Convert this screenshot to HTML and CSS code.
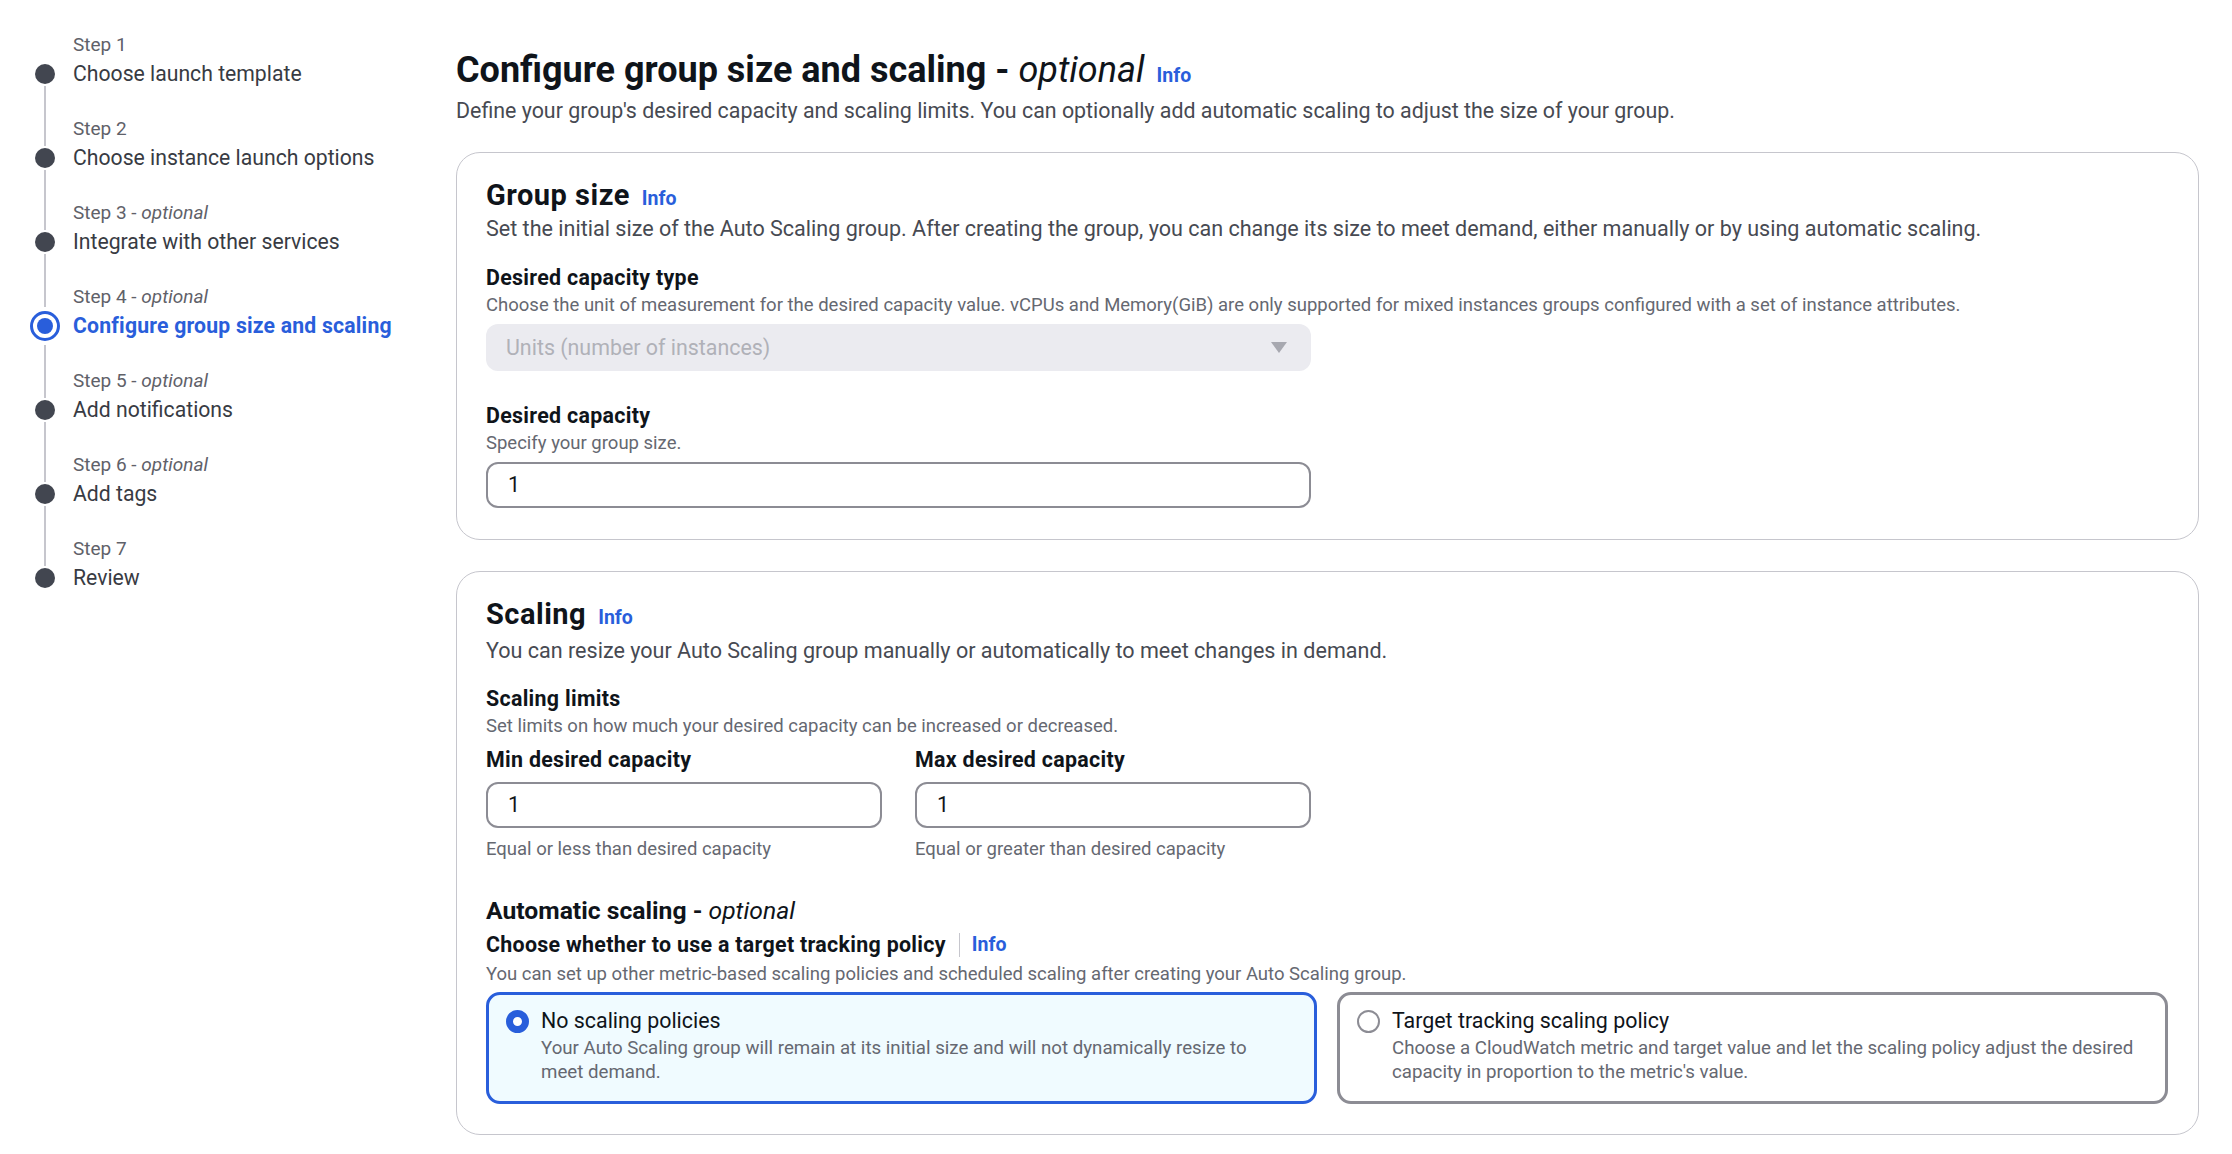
FILE: index.html
```html
<!DOCTYPE html>
<html lang="en">
<head>
<meta charset="utf-8">
<title>Configure group size and scaling</title>
<link rel="stylesheet" href="styles.css">
</head>
<body>
<div class="page">
  <nav class="wizard-nav">
    <ol class="steps">
      <li class="step first">
        <div class="rail"><span class="seg top"></span><span class="dot"></span><span class="seg bottom"></span></div>
        <div class="step-label">Step 1</div>
        <div class="step-title">Choose launch template</div>
      </li>
      <li class="step">
        <div class="rail"><span class="seg top"></span><span class="dot"></span><span class="seg bottom"></span></div>
        <div class="step-label">Step 2</div>
        <div class="step-title">Choose instance launch options</div>
      </li>
      <li class="step">
        <div class="rail"><span class="seg top"></span><span class="dot"></span><span class="seg bottom"></span></div>
        <div class="step-label">Step 3 - <i>optional</i></div>
        <div class="step-title">Integrate with other services</div>
      </li>
      <li class="step active">
        <div class="rail"><span class="seg top"></span><span class="ring"><span class="ring-dot"></span></span><span class="seg bottom"></span></div>
        <div class="step-label">Step 4 - <i>optional</i></div>
        <div class="step-title">Configure group size and scaling</div>
      </li>
      <li class="step">
        <div class="rail"><span class="seg top"></span><span class="dot"></span><span class="seg bottom"></span></div>
        <div class="step-label">Step 5 - <i>optional</i></div>
        <div class="step-title">Add notifications</div>
      </li>
      <li class="step">
        <div class="rail"><span class="seg top"></span><span class="dot"></span><span class="seg bottom"></span></div>
        <div class="step-label">Step 6 - <i>optional</i></div>
        <div class="step-title">Add tags</div>
      </li>
      <li class="step last">
        <div class="rail"><span class="seg top"></span><span class="dot"></span><span class="seg bottom"></span></div>
        <div class="step-label">Step 7</div>
        <div class="step-title">Review</div>
      </li>
    </ol>
  </nav>

  <main class="content">
    <header class="page-header">
      <h1 class="page-title">Configure group size and scaling - <i>optional</i><a class="info info-h1" href="#">Info</a></h1>
      <p class="page-desc">Define your group's desired capacity and scaling limits. You can optionally add automatic scaling to adjust the size of your group.</p>
    </header>

    <section class="panel panel-first">
      <h2 class="panel-title">Group size<a class="info" href="#">Info</a></h2>
      <p class="panel-desc">Set the initial size of the Auto Scaling group. After creating the group, you can change its size to meet demand, either manually or by using automatic scaling.</p>

      <div class="field field-first">
        <div class="field-label">Desired capacity type</div>
        <div class="field-desc">Choose the unit of measurement for the desired capacity value. vCPUs and Memory(GiB) are only supported for mixed instances groups configured with a set of instance attributes.</div>
        <div class="select">
          <span class="select-text">Units (number of instances)</span>
          <svg class="caret" width="16" height="11" viewBox="0 0 16 11"><path d="M0 0 H16 L8 11 Z" fill="#a7a8b0"/></svg>
        </div>
      </div>

      <div class="field field-spaced">
        <div class="field-label">Desired capacity</div>
        <div class="field-desc">Specify your group size.</div>
        <div class="input">1</div>
      </div>
    </section>

    <section class="panel">
      <h2 class="panel-title">Scaling<a class="info" href="#">Info</a></h2>
      <p class="panel-desc panel-desc-b">You can resize your Auto Scaling group manually or automatically to meet changes in demand.</p>

      <div class="field field-limits">
        <div class="field-label">Scaling limits</div>
        <div class="field-desc">Set limits on how much your desired capacity can be increased or decreased.</div>
      </div>

      <div class="limits">
        <div class="limit">
          <div class="field-label">Min desired capacity</div>
          <div class="input">1</div>
          <div class="hint">Equal or less than desired capacity</div>
        </div>
        <div class="limit">
          <div class="field-label">Max desired capacity</div>
          <div class="input">1</div>
          <div class="hint">Equal or greater than desired capacity</div>
        </div>
      </div>

      <h3 class="sub-title">Automatic scaling - <i>optional</i></h3>
      <div class="policy-label"><span>Choose whether to use a target tracking policy</span><span class="divider"></span><a class="info info-inline" href="#">Info</a></div>
      <div class="field-desc">You can set up other metric-based scaling policies and scheduled scaling after creating your Auto Scaling group.</div>

      <div class="tiles">
        <div class="tile selected">
          <span class="radio checked"></span>
          <div class="tile-body">
            <div class="tile-title">No scaling policies</div>
            <div class="tile-desc">Your Auto Scaling group will remain at its initial size and will not dynamically resize to meet demand.</div>
          </div>
        </div>
        <div class="tile">
          <span class="radio"></span>
          <div class="tile-body">
            <div class="tile-title">Target tracking scaling policy</div>
            <div class="tile-desc">Choose a CloudWatch metric and target value and let the scaling policy adjust the desired capacity in proportion to the metric's value.</div>
          </div>
        </div>
      </div>
    </section>
  </main>
</div>
</body>
</html>
```

FILE: styles.css
```css
* { box-sizing: border-box; }

html, body {
  margin: 0;
  padding: 0;
  background: #ffffff;
}

body {
  font-family: Roboto, "Liberation Sans", Arial, sans-serif;
  color: #0f141a;
  font-size: 21.4px;
  line-height: 30px;
}

a { text-decoration: none; }

.page {
  display: flex;
  align-items: flex-start;
  width: 2232px;
}

/* ---------- Wizard navigation ---------- */
.wizard-nav {
  width: 456px;
  flex-shrink: 0;
  padding: 33px 0 0 30px;
}

.steps {
  list-style: none;
  margin: 0;
  padding: 0;
}

.step {
  display: grid;
  grid-template-columns: 30px 1fr;
  grid-template-rows: 24px 32px 28px;
  column-gap: 13px;
}

.rail {
  grid-column: 1;
  grid-row: 1 / 4;
  display: flex;
  flex-direction: column;
  align-items: center;
}

.seg {
  width: 2px;
  background: #c6c6cd;
}

.seg.top {
  height: 29px;
  margin-bottom: 2px;
}

.seg.bottom {
  flex: 1;
  margin-top: 2px;
}

.step.first .seg.top,
.step.last .seg.bottom {
  visibility: hidden;
}

.dot {
  width: 20px;
  height: 20px;
  border-radius: 50%;
  background: #424650;
  flex-shrink: 0;
}

.step.active .seg.top {
  height: 22px;
  margin-bottom: 4px;
}

.step.active .seg.bottom {
  margin-top: 4px;
}

.ring {
  width: 30px;
  height: 30px;
  border: 3px solid #295edb;
  border-radius: 50%;
  display: flex;
  align-items: center;
  justify-content: center;
  flex-shrink: 0;
}

.ring-dot {
  width: 16px;
  height: 16px;
  border-radius: 50%;
  background: #295edb;
}

.step-label {
  grid-column: 2;
  grid-row: 1;
  font-size: 19px;
  line-height: 24px;
  color: #5f6169;
  white-space: nowrap;
}

.step-title {
  grid-column: 2;
  grid-row: 2;
  padding-top: 2px;
  font-size: 21.2px;
  line-height: 30px;
  color: #383b43;
  white-space: nowrap;
}

.step.active .step-title {
  color: #295edb;
  font-weight: 700;
  letter-spacing: 0.2px;
}

/* ---------- Main content ---------- */
.content {
  flex: 1;
  min-width: 0;
  padding: 48px 33px 0 0;
}

.page-title {
  margin: 0;
  font-size: 36px;
  line-height: 45px;
  font-weight: 700;
  white-space: nowrap;
}

.page-title i {
  font-weight: 400;
}

.info {
  color: #295edb;
  font-weight: 700;
  font-size: 19.5px;
  line-height: 1;
  letter-spacing: 0;
  margin-left: 12px;
}

.page-desc {
  margin: 3px 0 0;
  color: #474a52;
  line-height: 30px;
}

.panel {
  margin-top: 31px;
  border: 1px solid #c6c6cd;
  border-radius: 24px;
  padding: 26px 30px 30px 29px;
}

.panel-first {
  margin-top: 26px;
  padding-bottom: 31px;
}

.panel-title {
  margin: 0;
  font-size: 29px;
  line-height: 33px;
  font-weight: 700;
  letter-spacing: 0.5px;
}

.panel-desc {
  margin: 2px 0 0;
  color: #474a52;
  line-height: 30px;
  font-size: 21.55px;
}

.panel-desc-b {
  margin-top: 5px;
}

.field-first {
  margin-top: 19px;
}

.field-spaced {
  margin-top: 30px;
}

.field-limits {
  margin-top: 18px;
}

.field-label {
  font-weight: 700;
  line-height: 30px;
  letter-spacing: 0.3px;
}

.field-desc {
  font-size: 18.5px;
  line-height: 24px;
  color: #656871;
}

.select {
  margin-top: 7px;
  width: 825px;
  height: 47px;
  border-radius: 12px;
  background: #ebebf0;
  display: flex;
  align-items: center;
  justify-content: space-between;
  padding: 0 24px 0 20px;
}

.select-text {
  color: #b0b1b8;
}

.input {
  margin-top: 7px;
  width: 825px;
  height: 46px;
  border: 2px solid #8c8c94;
  border-radius: 12px;
  padding: 0 0 0 20px;
  display: flex;
  align-items: center;
  color: #0f141a;
}

.limits {
  display: grid;
  grid-template-columns: 396px 396px;
  column-gap: 33px;
  margin-top: 7px;
}

.limits .input {
  width: 100%;
}

.hint {
  margin-top: 9px;
  font-size: 18.5px;
  line-height: 24px;
  color: #656871;
}

.sub-title {
  margin: 35px 0 0;
  font-size: 24.7px;
  line-height: 30px;
  font-weight: 700;
}

.sub-title i {
  font-weight: 400;
}

.policy-label {
  margin-top: 4px;
  display: flex;
  align-items: center;
  font-weight: 700;
  line-height: 30px;
  letter-spacing: 0.3px;
}

.divider {
  width: 1px;
  height: 24px;
  background: #c6c6cd;
  margin-left: 13px;
}

.info-inline {
  margin-left: 12px;
}

.policy-label + .field-desc {
  margin-top: 2px;
}

.tiles {
  margin-top: 6px;
  display: grid;
  grid-template-columns: 1fr 1fr;
  column-gap: 20px;
}

.tile {
  display: flex;
  gap: 12px;
  border: 3px solid #8c8c94;
  border-radius: 14px;
  padding: 11px 24px 17px 17px;
}

.tile.selected {
  border-color: #295edb;
  background: #f0fbff;
}

.radio {
  flex-shrink: 0;
  width: 23px;
  height: 23px;
  margin-top: 4px;
  border-radius: 50%;
  border: 2px solid #8c8c94;
  background: #ffffff;
}

.radio.checked {
  border: 7px solid #295edb;
}

.tile-title {
  line-height: 30px;
}

.tile-desc {
  font-size: 18.7px;
  line-height: 24px;
  color: #656871;
}
```
